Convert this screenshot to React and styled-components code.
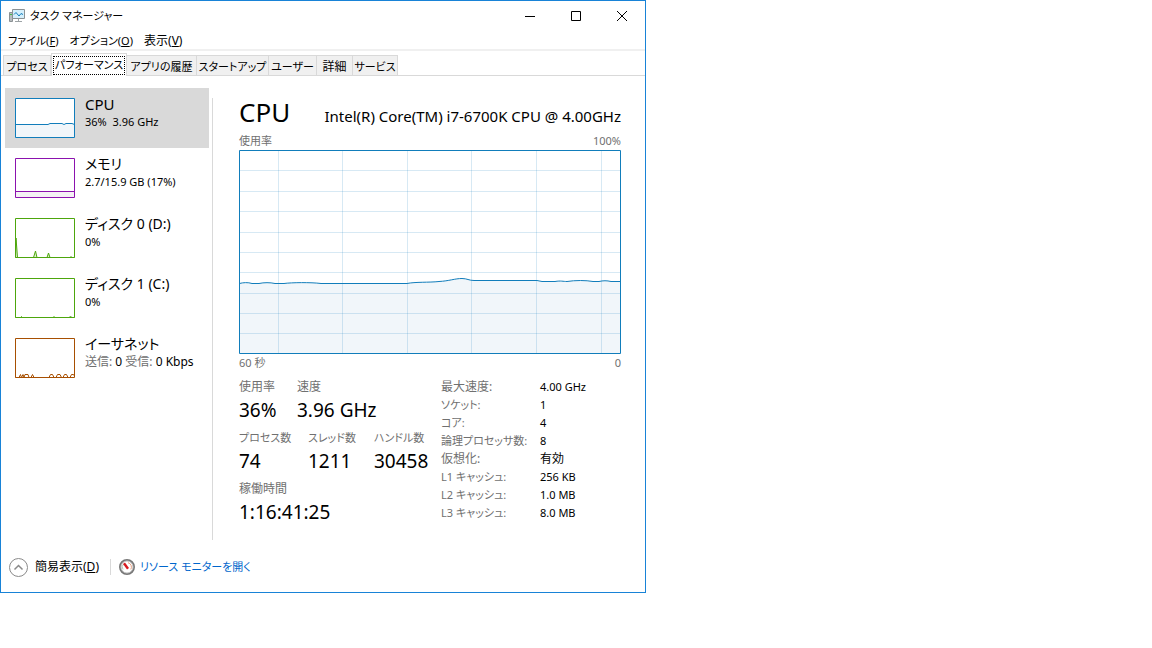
import React from "react";
import styled, { createGlobalStyle } from "styled-components";

const GlobalStyle = createGlobalStyle`
  * { box-sizing: border-box; }
  body {
    margin: 0;
    background: #ffffff;
    color: #000000;
    font: 12px/16px "Noto Sans", "Noto Sans CJK JP", sans-serif;
    font-feature-settings: "palt";
  }
  button { font: inherit; font-feature-settings: inherit; color: inherit; background: none; border: 0; margin: 0; padding: 0; }
  h1, h2, p, dl, dd { margin: 0; font-weight: 400; }
`;

const Window = styled.main`
  width: 100%;
  max-width: 646px;
  border: 1px solid #1883d7;
  background: #ffffff;
`;

const TitleBar = styled.header`
  display: flex;
  align-items: center;
  height: 30px;
  padding-left: 8px;
  gap: 5px;
`;

const Title = styled.h1`
  flex: 1;
  font-size: 11px;
`;

const CaptionButtons = styled.div`
  display: flex;
`;

const CaptionButton = styled.button`
  display: grid;
  place-items: center;
  width: 46px;
  height: 30px;
`;

const MenuBar = styled.nav`
  display: flex;
  gap: 11px;
  height: 20px;
  padding: 2px 7px 0;
  border-bottom: 2px solid #f0f0f0;
  line-height: 16px;
`;

const MenuItem = styled.button`
  font-size: ${(p) => (p.$kana ? 11 : 12)}px;
`;

const TabStrip = styled.div`
  display: flex;
  align-items: flex-end;
  height: 25px;
  padding-left: 2px;
  border-bottom: 1px solid #d9d9d9;
`;

const Tab = styled.button`
  width: ${(p) => p.$width}px;
  height: ${(p) => (p.$active ? 23 : 20)}px;
  margin-bottom: ${(p) => (p.$active ? -1 : 0)}px;
  padding: ${(p) => (p.$active ? "1px" : "2px 0 0")};
  border: 1px solid #d9d9d9;
  border-bottom: 0;
  border-left-width: ${(p) => (p.$first || p.$active ? 1 : 0)}px;
  background: ${(p) => (p.$active ? "#ffffff" : "#f0f0f0")};
  font-size: ${(p) => (p.$kana ? 11 : 12)}px;
  white-space: nowrap;
  display: grid;
  place-items: center;
`;

const FocusRing = styled.span`
  display: grid;
  place-items: center;
  width: 100%;
  height: 19px;
  border: 1px dotted #000000;
`;

const Body = styled.div`
  display: flex;
  padding: 12px 24px 0 4px;
`;

const Sidebar = styled.nav`
  width: 204px;
  flex: none;
`;

const Resource = styled.button`
  display: flex;
  gap: 10px;
  width: 100%;
  height: 60px;
  padding: 10px 0 0 10px;
  background: ${(p) => (p.$active ? "#d9d9d9" : "transparent")};
  text-align: left;
`;

const Thumb = styled.svg`
  flex: none;
  width: 60px;
  height: 40px;
  display: block;
`;

const ResourceText = styled.span`
  display: block;
  margin-top: -4px;
`;

const ResourceName = styled.span`
  display: block;
  font-size: ${(p) => (p.$kana ? 14 : 15)}px;
  line-height: 20px;
  white-space: nowrap;
`;

const ResourceValue = styled.span`
  display: block;
  font-size: ${(p) => (p.$wide ? 12 : 11)}px;
  line-height: 16px;
  white-space: pre;
`;

const Muted = styled.span`
  color: #707070;
`;

const Detail = styled.section`
  flex: 1;
  min-width: 0;
  margin: 10px 0 0 3px;
  padding-left: 26px;
  min-height: 442px;
  border-left: 1px solid #d9d9d9;
`;

const DetailHeader = styled.div`
  display: flex;
  align-items: baseline;
  justify-content: space-between;
  height: 35px;
`;

const Heading = styled.h2`
  font-size: 26px;
  line-height: 28px;
`;

const Model = styled.p`
  font-size: 15px;
  line-height: 20px;
`;

const AxisRow = styled.div`
  display: flex;
  justify-content: space-between;
  height: 17px;
  color: #707070;
  font-size: 11px;
  line-height: ${(p) => (p.$below ? 18 : 16)}px;
`;

const Chart = styled.svg`
  display: block;
  width: 100%;
  height: 204px;
`;

const Stats = styled.div`
  display: flex;
  padding-top: 8px;
`;

const Counters = styled.div`
  flex: 0 0 202px;
`;

const CounterRow = styled.dl`
  display: grid;
  grid-template-columns: ${(p) => p.$columns};
  height: 51px;
`;

const Label = styled.dt`
  color: #707070;
  font-size: ${(p) => (p.$kana ? 11 : 12)}px;
  line-height: 16px;
  white-space: nowrap;
`;

const BigValue = styled.dd`
  font-size: 19px;
  line-height: 30px;
  white-space: nowrap;
`;

const Specs = styled.dl`
  display: grid;
  grid-template-columns: 99px 1fr;
  grid-auto-rows: 18px;
  white-space: nowrap;
`;

const SpecValue = styled.dd`
  font-size: ${(p) => (p.$kanji ? 12 : 11)}px;
  line-height: 16px;
`;

const Footer = styled.footer`
  display: flex;
  align-items: center;
  height: 52px;
  padding: 2px 8px 0 8px;
`;

const Fewer = styled.button`
  display: flex;
  align-items: center;
  gap: 7px;
  padding-right: 11px;
`;

const MonitorLink = styled.a`
  display: flex;
  align-items: center;
  gap: 5px;
  padding-left: 8px;
  border-left: 1px solid #d9d9d9;
  color: #0066cc;
  font-size: 11px;
  text-decoration: none;
`;

const hasKana = (text) => /[\u30a0-\u30ff]/.test(text);

const tabs = [
  ["プロセス", 48], ["パフォーマンス", 76], ["アプリの履歴", 70], ["スタートアップ", 72],
  ["ユーザー", 48], ["詳細", 36], ["サービス", 45],
];

const resources = [
  { name: "CPU", value: "36%  3.96 GHz", color: "#117dbb", fill: "#f1f6fa",
    area: "M.5 26.5H33L35 25.5H47L49 26.5L51 25.5H57L59.5 26.5" },
  { name: "メモリ", value: "2.7/15.9 GB (17%)", color: "#8b12ae", fill: "#f4f2f4", area: "M.5 33.5H59.5" },
  { name: "ディスク 0 (D:)", value: "0%", color: "#4da60c", fill: "#dff0d2",
    area: "M.5 39.5L1 20L2.5 39.5H18.5L20.5 33L22 39.5H32L33.5 35L35 39.5H55L56 38.5L57 39.5H59.5" },
  { name: "ディスク 1 (C:)", value: "0%", color: "#4da60c", fill: "#ffffff",
    area: "M.5 39.5H5.5L6.5 38.5L7.5 39.5H38L39 38.5L40 39.5H54L55.5 38.5L57 39.5H59.5" },
  { name: "イーサネット", color: "#a74f01", fill: "#ffffff", wide: true,
    value: <><Muted>送信:</Muted> 0 <Muted>受信:</Muted> 0 Kbps</>,
    area: "M.5 39.5H4L5.5 36.5L6.5 39.5L8 36.5L9 39.5L10 36.5H13L14 39.5L16 39.5L17.5 36.5L19 39.5H34L35.5 36.5H37.5L39 39.5H41L42.5 36.5H45L46.5 39.5H48L49.5 36.5H51.5L53 39.5H55L56.5 36.5H58.5L59.5 38" },
];

const counters = [
  { columns: "58px auto", items: [["使用率", "36%"], ["速度", "3.96 GHz"]] },
  { columns: "69px 66px auto", items: [["プロセス数", "74"], ["スレッド数", "1211"], ["ハンドル数", "30458"]] },
  { columns: "auto", items: [["稼働時間", "1:16:41:25"]] },
];

const specs = [
  ["最大速度:", "4.00 GHz"], ["ソケット:", "1"], ["コア:", "4"], ["論理プロセッサ数:", "8"],
  ["仮想化:", "有効"], ["L1 キャッシュ:", "256 KB"], ["L2 キャッシュ:", "1.0 MB"], ["L3 キャッシュ:", "8.0 MB"],
];

const usageLine =
  "M.5 133.5C4 132.5 9 132.2 13 133.5H20C25 132.4 31 132.4 36 133.5H45C52 132.5 72 132.2 82 133.5H168C176 131.8 190 132.6 200 131.5C210 131 216 128.5 223 128.5C228 128.5 230 130.5 235 130.5H298L303 131.5H316C322 130.5 324 131.5 328 131.5C336 130.2 347 130.2 354 131.5H360C364 130.5 368 130.5 372 131.5H381.5";

function AppIcon() {
  return (
    <svg width="16" height="16" viewBox="0 0 16 16" fill="none" aria-hidden="true">
      <path d="M.5 4.5h3v9h-3z" fill="#b7bcbf" stroke="#8b9194" />
      <path d="M1 6.5h2" stroke="#43b649" />
      <path d="M3.5 1.5h12v9h-12z" fill="#d5effb" stroke="#8b9194" />
      <path d="M5 6.5L7 4.5L10 8L12 5.5L14 6.5" stroke="#117dbb" />
      <path d="M9.5 11v2M6 13.5h7" stroke="#9da3a6" />
    </svg>
  );
}

function Gauge() {
  return (
    <svg width="16" height="16" viewBox="0 0 16 16" fill="none" aria-hidden="true">
      <circle cx="8" cy="8" r="7" fill="#ffffff" stroke="#777777" strokeWidth="2" />
      <circle cx="8" cy="8" r="6" stroke="#c9c9c9" />
      <path d="M4 10.5A4.5 4.5 0 0 1 4.5 5" stroke="#b8c8b8" />
      <path d="M9 3.7A4.5 4.5 0 0 1 11.8 10.4" stroke="#e8a080" />
      <path d="M5 4.2L9 9.8" stroke="#d8191f" strokeWidth="2.4" />
    </svg>
  );
}

export default function App() {
  return (
    <>
      <GlobalStyle />
      <Window>
        <TitleBar>
          <AppIcon />
          <Title>タスク マネージャー</Title>
          <CaptionButtons>
            <CaptionButton aria-label="最小化">
              <svg width="10" height="10" fill="none" stroke="#000"><path d="M0 5.5H10" /></svg>
            </CaptionButton>
            <CaptionButton aria-label="最大化">
              <svg width="10" height="10" fill="none" stroke="#000"><path d="M.5 .5h9v9h-9z" /></svg>
            </CaptionButton>
            <CaptionButton aria-label="閉じる">
              <svg width="10" height="10" fill="none" stroke="#000"><path d="M0 0L10 10M10 0L0 10" /></svg>
            </CaptionButton>
          </CaptionButtons>
        </TitleBar>
        <MenuBar>
          <MenuItem $kana>ファイル(<u>F</u>)</MenuItem>
          <MenuItem $kana>オプション(<u>O</u>)</MenuItem>
          <MenuItem>表示(<u>V</u>)</MenuItem>
        </MenuBar>
        <TabStrip role="tablist">
          {tabs.map(([name, width], i) => (
            <Tab key={name} role="tab" aria-selected={i === 1} $active={i === 1} $first={i === 0} $kana={hasKana(name)} $width={width}>
              {i === 1 ? <FocusRing>{name}</FocusRing> : name}
            </Tab>
          ))}
        </TabStrip>
        <Body>
          <Sidebar>
            {resources.map((r, i) => (
              <Resource key={r.name} $active={i === 0}>
                <Thumb viewBox="0 0 60 40" fill="none">
                  <path d="M.5 .5h59v39h-59z" fill="#ffffff" />
                  <path d={`${r.area}V39.5H.5z`} fill={r.fill} />
                  <path d={r.area} stroke={r.color} />
                  <path d="M.5 .5h59v39h-59z" stroke={r.color} />
                </Thumb>
                <ResourceText>
                  <ResourceName $kana={hasKana(r.name)}>{r.name}</ResourceName>
                  <ResourceValue $wide={r.wide}>{r.value}</ResourceValue>
                </ResourceText>
              </Resource>
            ))}
          </Sidebar>
          <Detail>
            <DetailHeader>
              <Heading>CPU</Heading>
              <Model>Intel(R) Core(TM) i7-6700K CPU @ 4.00GHz</Model>
            </DetailHeader>
            <AxisRow><span>使用率</span><span>100%</span></AxisRow>
            <Chart viewBox="0 0 382 204" preserveAspectRatio="none" fill="none">
              <path d={`${usageLine}V203.5H.5z`} fill="#f1f6fa" />
              <path
                d="M39.5 0V204M103.5 0V204M168.5 0V204M232.5 0V204M297.5 0V204M362.5 0V204M0 20.5H382M0 41.5H382M0 61.5H382M0 82.5H382M0 102.5H382M0 122.5H382M0 143.5H382M0 163.5H382M0 183.5H382"
                stroke="#117dbb" strokeOpacity=".17"
              />
              <path d={usageLine} stroke="#117dbb" />
              <path d="M.5 .5h381v203H.5z" stroke="#117dbb" />
            </Chart>
            <AxisRow $below><span>60 秒</span><span>0</span></AxisRow>
            <Stats>
              <Counters>
                {counters.map((row) => (
                  <CounterRow key={row.columns} $columns={row.columns}>
                    {row.items.map(([label, value]) => (
                      <div key={label}><Label $kana={hasKana(label)}>{label}</Label><BigValue>{value}</BigValue></div>
                    ))}
                  </CounterRow>
                ))}
              </Counters>
              <Specs>
                {specs.map(([label, value]) => (
                  <React.Fragment key={label}>
                    <Label $kana={hasKana(label)}>{label}</Label>
                    <SpecValue $kanji={value === "有効"}>{value}</SpecValue>
                  </React.Fragment>
                ))}
              </Specs>
            </Stats>
          </Detail>
        </Body>
        <Footer>
          <Fewer>
            <svg width="19" height="19" viewBox="0 0 19 19" fill="none" aria-hidden="true">
              <circle cx="9.5" cy="9.5" r="9" stroke="#8a8a8a" />
              <path d="M5.5 11.5L9.5 7.5L13.5 11.5" stroke="#8a8a8a" strokeWidth="1.5" />
            </svg>
            <span>簡易表示(<u>D</u>)</span>
          </Fewer>
          <MonitorLink href="#resmon"><Gauge />リソース モニターを開く</MonitorLink>
        </Footer>
      </Window>
    </>
  );
}
